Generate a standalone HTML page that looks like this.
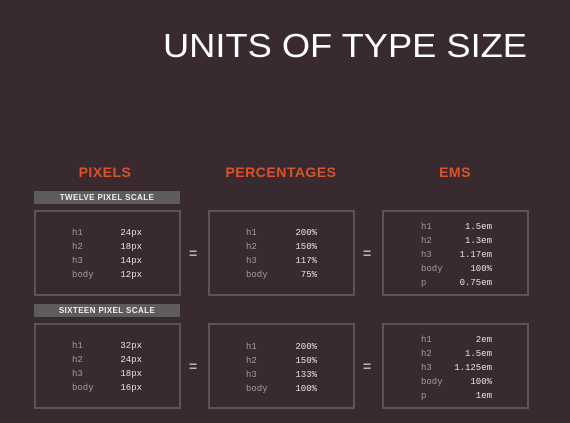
<!DOCTYPE html>
<html><head><meta charset="utf-8"><style>
*{margin:0;padding:0;box-sizing:border-box}
body{width:570px;height:423px;background:#382a2f;position:relative;overflow:hidden;font-family:"Liberation Sans",sans-serif}
.a{position:absolute}
.h{color:#d9532c;font-weight:bold;font-size:14px;text-align:center;width:200px;letter-spacing:0.5px}
.bar{background:#5d5b5c;color:#eee;font-size:8px;font-weight:bold;text-align:center;width:146px;height:13px;line-height:13px;letter-spacing:0.4px}
.box{border:2px solid #5a5556;width:147px;height:86px}
.t{font-family:"Liberation Mono",monospace;font-size:9px;line-height:14px}
.l{color:#a59b9c}
.v{color:#e8e2dc;text-align:right}
.eq{color:#bdb5b5;font-size:14px;font-weight:bold}
</style></head><body>
<svg class="a" style="left:0;top:0" width="570" height="80"><text x="163" y="57" textLength="364" lengthAdjust="spacingAndGlyphs" fill="#fff" font-family="Liberation Sans" font-size="33">UNITS OF TYPE SIZE</text></svg>
<div class="a h" style="left:5px;top:164px">PIXELS</div>
<div class="a h" style="left:181px;top:164px">PERCENTAGES</div>
<div class="a h" style="left:355px;top:164px">EMS</div>
<div class="a bar" style="left:34px;top:191px">TWELVE PIXEL SCALE</div>
<div class="a bar" style="left:34px;top:304px">SIXTEEN PIXEL SCALE</div>

<div class="a box" style="left:34px;top:210px"></div>
<div class="a box" style="left:208px;top:210px"></div>
<div class="a box" style="left:382px;top:210px"></div>
<div class="a box" style="left:34px;top:323px"></div>
<div class="a box" style="left:208px;top:323px"></div>
<div class="a box" style="left:382px;top:323px"></div>

<div class="a eq" style="left:189px;top:245px">=</div>
<div class="a eq" style="left:363px;top:245px">=</div>
<div class="a eq" style="left:189px;top:358px">=</div>
<div class="a eq" style="left:363px;top:358px">=</div>

<div class="a t l" style="left:72px;top:226px">h1<br>h2<br>h3<br>body</div>
<div class="a t v" style="left:90px;top:226px;width:52px">24px<br>18px<br>14px<br>12px</div>
<div class="a t l" style="left:246px;top:226px">h1<br>h2<br>h3<br>body</div>
<div class="a t v" style="left:264px;top:226px;width:53px">200%<br>150%<br>117%<br>75%</div>
<div class="a t l" style="left:421px;top:220px">h1<br>h2<br>h3<br>body<br>p</div>
<div class="a t v" style="left:440px;top:220px;width:52px">1.5em<br>1.3em<br>1.17em<br>100%<br>0.75em</div>

<div class="a t l" style="left:72px;top:339px">h1<br>h2<br>h3<br>body</div>
<div class="a t v" style="left:90px;top:339px;width:52px">32px<br>24px<br>18px<br>16px</div>
<div class="a t l" style="left:246px;top:340px">h1<br>h2<br>h3<br>body</div>
<div class="a t v" style="left:264px;top:340px;width:53px">200%<br>150%<br>133%<br>100%</div>
<div class="a t l" style="left:421px;top:333px">h1<br>h2<br>h3<br>body<br>p</div>
<div class="a t v" style="left:430px;top:333px;width:62px">2em<br>1.5em<br>1.125em<br>100%<br>1em</div>
</body></html>
